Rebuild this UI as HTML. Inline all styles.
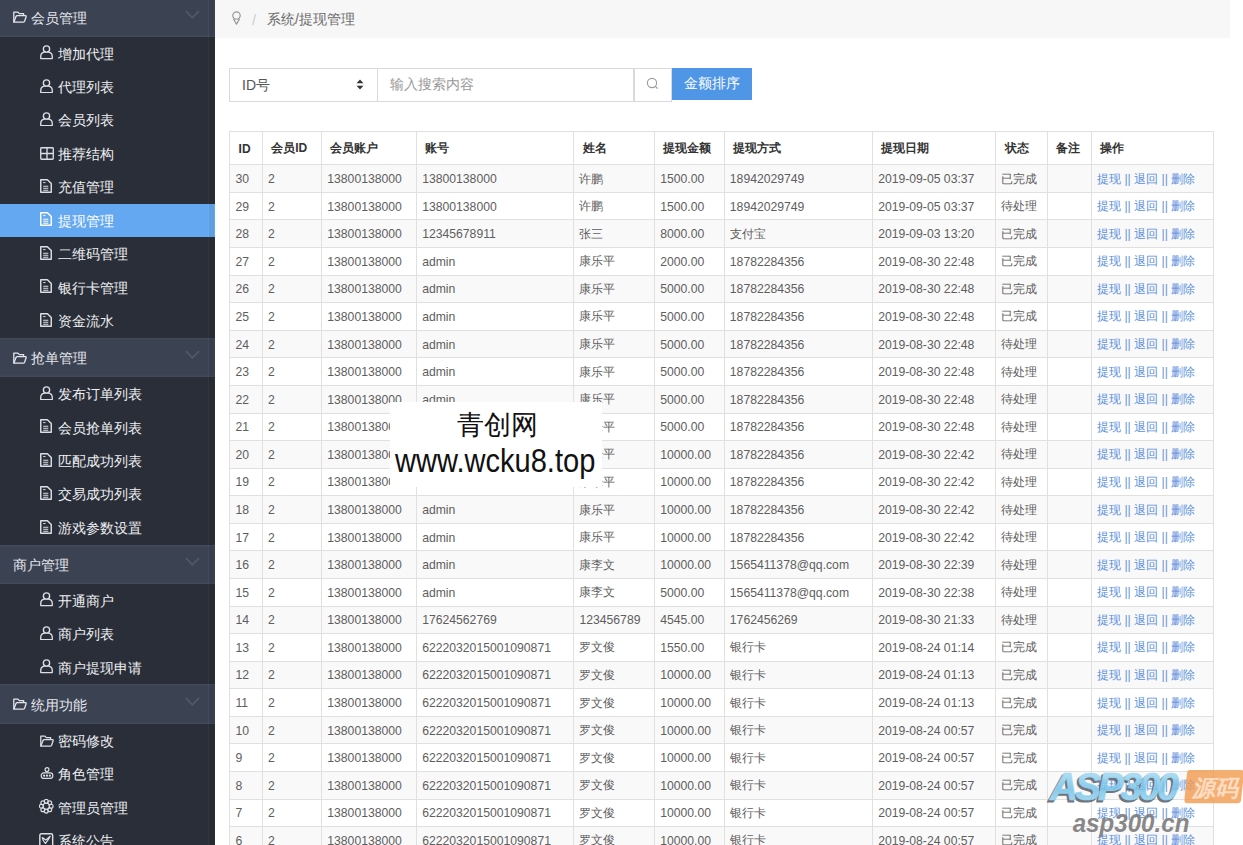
<!DOCTYPE html>
<html><head><meta charset="utf-8"><title>提现管理</title>
<style>
*{box-sizing:border-box;margin:0;padding:0}
html,body{width:1243px;height:845px;overflow:hidden;background:#fff;font-family:"Liberation Sans",sans-serif}
#side{position:absolute;left:0;top:0;width:215px;height:845px;background:#2a2e38;overflow:hidden}
.gh{position:absolute;left:0;width:215px;height:39.5px;background:#3b4252;box-shadow:inset 0 1.5px 0 rgba(255,255,255,0.04),inset 0 -1.5px 0 rgba(255,255,255,0.04);color:#e6e8ee;font-size:14px;line-height:39.5px;white-space:nowrap}
.gh .ic{position:absolute;left:12.8px;color:#e3e6ec}
.gh .ic[style]{top:14px!important}
.gh .gt{position:absolute;left:31px;top:1.5px;font-weight:500;font-size:13.8px}
.gh.noic .gt{left:13px}
.gh .chev{position:absolute;left:185.3px;top:12.6px;width:15px;height:9px;color:#505766}
.it{position:absolute;left:0;width:215px;height:33.45px;color:#eef0f3;font-size:13.6px;line-height:33.45px;white-space:nowrap}
.it .ic{position:absolute;left:40px;width:13px;height:13px;color:#dcdfe5}
.it .t{position:absolute;left:57.8px;top:0.8px;font-weight:500}
.it.act{background:#63a8f0;color:#fff}
.it.act .ic{color:#fff}
#crumb{position:absolute;left:215px;top:0;width:1015px;height:37.6px;background:#f7f7f7}
#crumb .bulb{position:absolute;left:231.5px;top:11px;width:11px;height:14px}
#crumb .sl{position:absolute;left:251px;top:11px;font-size:14px;color:#c8c8c8;line-height:16px}
#crumb .ct{position:absolute;left:267px;top:10.5px;font-size:13.8px;color:#6a6a6a;line-height:18px}
#search{position:absolute;left:229px;top:68.3px;height:33.5px}
.sel{position:absolute;left:0;top:0;width:148.5px;height:33.5px;border:1px solid #d9d9d9;background:#fff}
.sel .v{position:absolute;left:12px;top:6.5px;font-size:14px;color:#555;line-height:18px}
.sel .arr{position:absolute;left:126px;top:10px;width:8px;height:11px}
.inp{position:absolute;left:148px;top:0;width:257px;height:33.5px;border:1px solid #d9d9d9;background:#fff}
.inp .ph{position:absolute;left:12px;top:7px;font-size:13.5px;color:#999;line-height:18px}
.sbtn{position:absolute;left:404.5px;top:0;width:38.5px;height:33.5px;border:1px solid #d9d9d9;background:#fff}
.sbtn svg{position:absolute;left:11px;top:7.5px;width:14px;height:14px}
.pbtn{position:absolute;left:443px;top:0;width:80px;height:32px;background:#5096e6;color:#fff;font-size:13.5px;font-weight:500;line-height:32px;text-align:center}
#tbl{position:absolute;left:229.1px;top:131.0px;border-collapse:collapse;table-layout:fixed;width:984.10px;font-size:12.5px}
#tbl th,#tbl td{border:1px solid #e0e0e0;text-align:left;white-space:nowrap;overflow:hidden;font-weight:normal}
#tbl th{height:33.3px;padding-left:8.5px;padding-top:1px;color:#333;font-weight:bold;font-size:12px}
#tbl td{height:27.58px;padding-left:5.3px;padding-top:1px;color:#5e5e5e;font-size:12.2px}
#tbl tr.odd td{background:#f9f9f9}
#tbl td.op{color:#6b93d6}
#tbl td.op a{color:#5b8fe0}
#wm{position:absolute;left:390px;top:401.5px;width:211.5px;height:85px;background:#fff}
#wm .a{position:absolute;left:0;width:212px;top:7.5px;text-align:center;font-size:27px;color:#111;line-height:32px;padding-left:3px}
#wm .b{position:absolute;left:5px;top:41px;white-space:nowrap;font-size:33px;color:#111;line-height:36px;transform:scaleX(0.881);transform-origin:0 0}
#asp{position:absolute;left:1040px;top:760px;width:203px;height:85px}
</style></head><body>
<div id="side">
<div class="gh" style="top:-2.70px"><svg class="ic" viewBox="0 0 14 12" style="width:14px;height:12px;top:11px"><path d="M0.8 11.2V1.1H4.9L6.3 2.6H10.6V4.6" fill="none" stroke="currentColor" stroke-width="1.3" stroke-linejoin="round"/><path d="M0.8 11.2L3 5.6Q3.3 4.7 4.2 4.7H12.3Q13.5 4.7 13.1 5.8L11.6 10.2Q11.2 11.2 10.2 11.2Z" fill="none" stroke="currentColor" stroke-width="1.3" stroke-linejoin="round"/></svg><span class="gt">会员管理</span><svg class="chev" viewBox="0 0 15 9"><path d="M1 1L7.3 7.8L14 1" fill="none" stroke="currentColor" stroke-width="1.9"/></svg></div><div class="it" style="top:36.80px"><svg class="ic" viewBox="0 0 13 14.5" style="width:13px;height:14.5px;top:8.3px"><path d="M0.75 13.6V11.2C0.75 8.6 2.9 6.9 6.5 6.9C10.1 6.9 12.25 8.6 12.25 11.2V13.6Z" fill="none" stroke="currentColor" stroke-width="1.35" stroke-linejoin="round"/><circle cx="6.5" cy="4" r="3.15" fill="#2a2e38" stroke="currentColor" stroke-width="1.35"/></svg><span class="t">增加代理</span></div><div class="it" style="top:70.25px"><svg class="ic" viewBox="0 0 13 14.5" style="width:13px;height:14.5px;top:8.3px"><path d="M0.75 13.6V11.2C0.75 8.6 2.9 6.9 6.5 6.9C10.1 6.9 12.25 8.6 12.25 11.2V13.6Z" fill="none" stroke="currentColor" stroke-width="1.35" stroke-linejoin="round"/><circle cx="6.5" cy="4" r="3.15" fill="#2a2e38" stroke="currentColor" stroke-width="1.35"/></svg><span class="t">代理列表</span></div><div class="it" style="top:103.70px"><svg class="ic" viewBox="0 0 13 14.5" style="width:13px;height:14.5px;top:8.3px"><path d="M0.75 13.6V11.2C0.75 8.6 2.9 6.9 6.5 6.9C10.1 6.9 12.25 8.6 12.25 11.2V13.6Z" fill="none" stroke="currentColor" stroke-width="1.35" stroke-linejoin="round"/><circle cx="6.5" cy="4" r="3.15" fill="#2a2e38" stroke="currentColor" stroke-width="1.35"/></svg><span class="t">会员列表</span></div><div class="it" style="top:137.15px"><svg class="ic" viewBox="0 0 14 13" style="top:9.6px;left:39.5px;width:14px;height:13px"><rect x="0.75" y="0.75" width="12.5" height="11.5" rx="0.8" fill="none" stroke="currentColor" stroke-width="1.35"/><path d="M7 0.75V12.25M0.75 6.5H13.25" stroke="currentColor" stroke-width="1.35"/></svg><span class="t">推荐结构</span></div><div class="it" style="top:170.60px"><svg class="ic" viewBox="0 0 12 14" style="width:12px;height:14px;top:8.4px"><path d="M0.75 0.75H7.4L11.25 4.6V13.25H0.75Z" fill="none" stroke="currentColor" stroke-width="1.45" stroke-linejoin="round"/><path d="M3.2 7.3H8.3M3.2 9.3H8.3M3.2 11.2H8.3" stroke="currentColor" stroke-width="1.1"/><path d="M3.2 3.6H5.5" stroke="currentColor" stroke-width="1"/></svg><span class="t">充值管理</span></div><div class="it act" style="top:204.05px"><svg class="ic" viewBox="0 0 12 14" style="width:12px;height:14px;top:8.4px"><path d="M0.75 0.75H7.4L11.25 4.6V13.25H0.75Z" fill="none" stroke="currentColor" stroke-width="1.45" stroke-linejoin="round"/><path d="M3.2 7.3H8.3M3.2 9.3H8.3M3.2 11.2H8.3" stroke="currentColor" stroke-width="1.1"/><path d="M3.2 3.6H5.5" stroke="currentColor" stroke-width="1"/></svg><span class="t">提现管理</span></div><div class="it" style="top:237.50px"><svg class="ic" viewBox="0 0 12 14" style="width:12px;height:14px;top:8.4px"><path d="M0.75 0.75H7.4L11.25 4.6V13.25H0.75Z" fill="none" stroke="currentColor" stroke-width="1.45" stroke-linejoin="round"/><path d="M3.2 7.3H8.3M3.2 9.3H8.3M3.2 11.2H8.3" stroke="currentColor" stroke-width="1.1"/><path d="M3.2 3.6H5.5" stroke="currentColor" stroke-width="1"/></svg><span class="t">二维码管理</span></div><div class="it" style="top:270.95px"><svg class="ic" viewBox="0 0 12 14" style="width:12px;height:14px;top:8.4px"><path d="M0.75 0.75H7.4L11.25 4.6V13.25H0.75Z" fill="none" stroke="currentColor" stroke-width="1.45" stroke-linejoin="round"/><path d="M3.2 7.3H8.3M3.2 9.3H8.3M3.2 11.2H8.3" stroke="currentColor" stroke-width="1.1"/><path d="M3.2 3.6H5.5" stroke="currentColor" stroke-width="1"/></svg><span class="t">银行卡管理</span></div><div class="it" style="top:304.40px"><svg class="ic" viewBox="0 0 12 14" style="width:12px;height:14px;top:8.4px"><path d="M0.75 0.75H7.4L11.25 4.6V13.25H0.75Z" fill="none" stroke="currentColor" stroke-width="1.45" stroke-linejoin="round"/><path d="M3.2 7.3H8.3M3.2 9.3H8.3M3.2 11.2H8.3" stroke="currentColor" stroke-width="1.1"/><path d="M3.2 3.6H5.5" stroke="currentColor" stroke-width="1"/></svg><span class="t">资金流水</span></div><div class="gh" style="top:337.85px"><svg class="ic" viewBox="0 0 14 12" style="width:14px;height:12px;top:11px"><path d="M0.8 11.2V1.1H4.9L6.3 2.6H10.6V4.6" fill="none" stroke="currentColor" stroke-width="1.3" stroke-linejoin="round"/><path d="M0.8 11.2L3 5.6Q3.3 4.7 4.2 4.7H12.3Q13.5 4.7 13.1 5.8L11.6 10.2Q11.2 11.2 10.2 11.2Z" fill="none" stroke="currentColor" stroke-width="1.3" stroke-linejoin="round"/></svg><span class="gt">抢单管理</span><svg class="chev" viewBox="0 0 15 9"><path d="M1 1L7.3 7.8L14 1" fill="none" stroke="currentColor" stroke-width="1.9"/></svg></div><div class="it" style="top:377.35px"><svg class="ic" viewBox="0 0 13 14.5" style="width:13px;height:14.5px;top:8.3px"><path d="M0.75 13.6V11.2C0.75 8.6 2.9 6.9 6.5 6.9C10.1 6.9 12.25 8.6 12.25 11.2V13.6Z" fill="none" stroke="currentColor" stroke-width="1.35" stroke-linejoin="round"/><circle cx="6.5" cy="4" r="3.15" fill="#2a2e38" stroke="currentColor" stroke-width="1.35"/></svg><span class="t">发布订单列表</span></div><div class="it" style="top:410.80px"><svg class="ic" viewBox="0 0 12 14" style="width:12px;height:14px;top:8.4px"><path d="M0.75 0.75H7.4L11.25 4.6V13.25H0.75Z" fill="none" stroke="currentColor" stroke-width="1.45" stroke-linejoin="round"/><path d="M3.2 7.3H8.3M3.2 9.3H8.3M3.2 11.2H8.3" stroke="currentColor" stroke-width="1.1"/><path d="M3.2 3.6H5.5" stroke="currentColor" stroke-width="1"/></svg><span class="t">会员抢单列表</span></div><div class="it" style="top:444.25px"><svg class="ic" viewBox="0 0 12 14" style="width:12px;height:14px;top:8.4px"><path d="M0.75 0.75H7.4L11.25 4.6V13.25H0.75Z" fill="none" stroke="currentColor" stroke-width="1.45" stroke-linejoin="round"/><path d="M3.2 7.3H8.3M3.2 9.3H8.3M3.2 11.2H8.3" stroke="currentColor" stroke-width="1.1"/><path d="M3.2 3.6H5.5" stroke="currentColor" stroke-width="1"/></svg><span class="t">匹配成功列表</span></div><div class="it" style="top:477.70px"><svg class="ic" viewBox="0 0 12 14" style="width:12px;height:14px;top:8.4px"><path d="M0.75 0.75H7.4L11.25 4.6V13.25H0.75Z" fill="none" stroke="currentColor" stroke-width="1.45" stroke-linejoin="round"/><path d="M3.2 7.3H8.3M3.2 9.3H8.3M3.2 11.2H8.3" stroke="currentColor" stroke-width="1.1"/><path d="M3.2 3.6H5.5" stroke="currentColor" stroke-width="1"/></svg><span class="t">交易成功列表</span></div><div class="it" style="top:511.15px"><svg class="ic" viewBox="0 0 12 14" style="width:12px;height:14px;top:8.4px"><path d="M0.75 0.75H7.4L11.25 4.6V13.25H0.75Z" fill="none" stroke="currentColor" stroke-width="1.45" stroke-linejoin="round"/><path d="M3.2 7.3H8.3M3.2 9.3H8.3M3.2 11.2H8.3" stroke="currentColor" stroke-width="1.1"/><path d="M3.2 3.6H5.5" stroke="currentColor" stroke-width="1"/></svg><span class="t">游戏参数设置</span></div><div class="gh noic" style="top:544.60px"><span class="gt">商户管理</span><svg class="chev" viewBox="0 0 15 9"><path d="M1 1L7.3 7.8L14 1" fill="none" stroke="currentColor" stroke-width="1.9"/></svg></div><div class="it" style="top:584.10px"><svg class="ic" viewBox="0 0 13 14.5" style="width:13px;height:14.5px;top:8.3px"><path d="M0.75 13.6V11.2C0.75 8.6 2.9 6.9 6.5 6.9C10.1 6.9 12.25 8.6 12.25 11.2V13.6Z" fill="none" stroke="currentColor" stroke-width="1.35" stroke-linejoin="round"/><circle cx="6.5" cy="4" r="3.15" fill="#2a2e38" stroke="currentColor" stroke-width="1.35"/></svg><span class="t">开通商户</span></div><div class="it" style="top:617.55px"><svg class="ic" viewBox="0 0 13 14.5" style="width:13px;height:14.5px;top:8.3px"><path d="M0.75 13.6V11.2C0.75 8.6 2.9 6.9 6.5 6.9C10.1 6.9 12.25 8.6 12.25 11.2V13.6Z" fill="none" stroke="currentColor" stroke-width="1.35" stroke-linejoin="round"/><circle cx="6.5" cy="4" r="3.15" fill="#2a2e38" stroke="currentColor" stroke-width="1.35"/></svg><span class="t">商户列表</span></div><div class="it" style="top:651.00px"><svg class="ic" viewBox="0 0 13 14.5" style="width:13px;height:14.5px;top:8.3px"><path d="M0.75 13.6V11.2C0.75 8.6 2.9 6.9 6.5 6.9C10.1 6.9 12.25 8.6 12.25 11.2V13.6Z" fill="none" stroke="currentColor" stroke-width="1.35" stroke-linejoin="round"/><circle cx="6.5" cy="4" r="3.15" fill="#2a2e38" stroke="currentColor" stroke-width="1.35"/></svg><span class="t">商户提现申请</span></div><div class="gh" style="top:684.45px"><svg class="ic" viewBox="0 0 14 12" style="width:14px;height:12px;top:11px"><path d="M0.8 11.2V1.1H4.9L6.3 2.6H10.6V4.6" fill="none" stroke="currentColor" stroke-width="1.3" stroke-linejoin="round"/><path d="M0.8 11.2L3 5.6Q3.3 4.7 4.2 4.7H12.3Q13.5 4.7 13.1 5.8L11.6 10.2Q11.2 11.2 10.2 11.2Z" fill="none" stroke="currentColor" stroke-width="1.3" stroke-linejoin="round"/></svg><span class="gt">统用功能</span><svg class="chev" viewBox="0 0 15 9"><path d="M1 1L7.3 7.8L14 1" fill="none" stroke="currentColor" stroke-width="1.9"/></svg></div><div class="it" style="top:723.95px"><svg class="ic" viewBox="0 0 14 12" style="width:14px;height:12px;top:11px"><path d="M0.8 11.2V1.1H4.9L6.3 2.6H10.6V4.6" fill="none" stroke="currentColor" stroke-width="1.3" stroke-linejoin="round"/><path d="M0.8 11.2L3 5.6Q3.3 4.7 4.2 4.7H12.3Q13.5 4.7 13.1 5.8L11.6 10.2Q11.2 11.2 10.2 11.2Z" fill="none" stroke="currentColor" stroke-width="1.3" stroke-linejoin="round"/></svg><span class="t">密码修改</span></div><div class="it" style="top:757.40px"><svg class="ic" viewBox="0 0 14 14" style="top:9.8px;left:39.5px;width:14px;height:13px"><circle cx="7" cy="2.8" r="2.1" fill="none" stroke="currentColor" stroke-width="1.3"/><rect x="0.8" y="6.3" width="12.4" height="6" rx="2.6" fill="none" stroke="currentColor" stroke-width="1.3"/><circle cx="3.9" cy="9.3" r="1.2" fill="currentColor"/><circle cx="7" cy="9.3" r="1.2" fill="currentColor"/><circle cx="10.1" cy="9.3" r="1.2" fill="currentColor"/></svg><span class="t">角色管理</span></div><div class="it" style="top:790.85px"><svg class="ic" viewBox="0 0 14 14" style="top:8.5px;left:39px;width:14.5px;height:14.5px"><circle cx="11.70" cy="7.00" r="1.9" fill="none" stroke="currentColor" stroke-width="1.1"/><circle cx="10.32" cy="10.32" r="1.9" fill="none" stroke="currentColor" stroke-width="1.1"/><circle cx="7.00" cy="11.70" r="1.9" fill="none" stroke="currentColor" stroke-width="1.1"/><circle cx="3.68" cy="10.32" r="1.9" fill="none" stroke="currentColor" stroke-width="1.1"/><circle cx="2.30" cy="7.00" r="1.9" fill="none" stroke="currentColor" stroke-width="1.1"/><circle cx="3.68" cy="3.68" r="1.9" fill="none" stroke="currentColor" stroke-width="1.1"/><circle cx="7.00" cy="2.30" r="1.9" fill="none" stroke="currentColor" stroke-width="1.1"/><circle cx="10.32" cy="3.68" r="1.9" fill="none" stroke="currentColor" stroke-width="1.1"/><circle cx="7" cy="7" r="3" fill="#2a2e38" stroke="currentColor" stroke-width="1.2"/></svg><span class="t">管理员管理</span></div><div class="it" style="top:824.30px"><svg class="ic" viewBox="0 0 14 14" style="top:8.5px;left:39px;width:14.5px;height:14.5px"><rect x="0.8" y="0.8" width="12.4" height="12.4" rx="1.5" fill="none" stroke="currentColor" stroke-width="1.4"/><path d="M3.2 4.5Q4 8.5 6.3 10Q9 7 10.8 3.2Q8.5 5.5 6.5 6.8Q5 5.5 3.2 4.5Z" fill="none" stroke="currentColor" stroke-width="1.2" stroke-linejoin="round"/></svg><span class="t">系统公告</span></div>
<div style="position:absolute;left:208px;top:0;width:1px;height:845px;background:rgba(255,255,255,0.04)"></div><div style="position:absolute;left:209px;top:0;width:5px;height:845px;background:rgba(0,0,0,0.06)"></div>
</div>
<div id="crumb">
<svg class="bulb" style="left:16.3px;top:11.3px;width:11px;height:14px" viewBox="0 0 11 14"><path d="M2.4 7.6L5.5 13.2L8.6 7.6" fill="none" stroke="#9a9a9a" stroke-width="1.25" stroke-linejoin="round"/><circle cx="5.5" cy="4.5" r="3.7" fill="#f7f7f7" stroke="#9a9a9a" stroke-width="1.25"/></svg>
<span class="sl" style="left:37px;top:12px;font-size:15px;color:#cfcfcf">/</span>
<span class="ct" style="left:52px">系统/提现管理</span>
</div>
<div id="search">
<div class="sel"><span class="v">ID号</span><svg class="arr" viewBox="0 0 8 11"><path d="M4 0.5L7.5 4.3H0.5Z" fill="#333"/><path d="M4 10.5L7.5 6.7H0.5Z" fill="#333"/></svg></div>
<div class="inp"><span class="ph">输入搜索内容</span></div>
<div class="sbtn"><svg viewBox="0 0 14 14"><circle cx="6" cy="6" r="4.6" fill="none" stroke="#9a9a9a" stroke-width="1.1"/><path d="M9.3 9.3L11.6 11.6" stroke="#9a9a9a" stroke-width="1.2"/></svg></div>
<div class="pbtn">金额排序</div>
</div>
<table id="tbl"><colgroup><col style="width:32.70px"><col style="width:59.20px"><col style="width:94.90px"><col style="width:157.30px"><col style="width:80.70px"><col style="width:69.70px"><col style="width:148.30px"><col style="width:123.30px"><col style="width:51.60px"><col style="width:44.00px"><col style="width:122.40px"></colgroup><thead><tr><th>ID</th><th>会员ID</th><th>会员账户</th><th>账号</th><th>姓名</th><th>提现金额</th><th>提现方式</th><th>提现日期</th><th>状态</th><th>备注</th><th>操作</th></tr></thead><tbody>
<tr class="odd"><td>30</td><td>2</td><td>13800138000</td><td>13800138000</td><td>许鹏</td><td>1500.00</td><td>18942029749</td><td>2019-09-05 03:37</td><td>已完成</td><td></td><td class="op"><a>提现</a> || <a>退回</a> || <a>删除</a></td></tr><tr><td>29</td><td>2</td><td>13800138000</td><td>13800138000</td><td>许鹏</td><td>1500.00</td><td>18942029749</td><td>2019-09-05 03:37</td><td>待处理</td><td></td><td class="op"><a>提现</a> || <a>退回</a> || <a>删除</a></td></tr><tr class="odd"><td>28</td><td>2</td><td>13800138000</td><td>12345678911</td><td>张三</td><td>8000.00</td><td>支付宝</td><td>2019-09-03 13:20</td><td>已完成</td><td></td><td class="op"><a>提现</a> || <a>退回</a> || <a>删除</a></td></tr><tr><td>27</td><td>2</td><td>13800138000</td><td>admin</td><td>康乐平</td><td>2000.00</td><td>18782284356</td><td>2019-08-30 22:48</td><td>已完成</td><td></td><td class="op"><a>提现</a> || <a>退回</a> || <a>删除</a></td></tr><tr class="odd"><td>26</td><td>2</td><td>13800138000</td><td>admin</td><td>康乐平</td><td>5000.00</td><td>18782284356</td><td>2019-08-30 22:48</td><td>已完成</td><td></td><td class="op"><a>提现</a> || <a>退回</a> || <a>删除</a></td></tr><tr><td>25</td><td>2</td><td>13800138000</td><td>admin</td><td>康乐平</td><td>5000.00</td><td>18782284356</td><td>2019-08-30 22:48</td><td>已完成</td><td></td><td class="op"><a>提现</a> || <a>退回</a> || <a>删除</a></td></tr><tr class="odd"><td>24</td><td>2</td><td>13800138000</td><td>admin</td><td>康乐平</td><td>5000.00</td><td>18782284356</td><td>2019-08-30 22:48</td><td>待处理</td><td></td><td class="op"><a>提现</a> || <a>退回</a> || <a>删除</a></td></tr><tr><td>23</td><td>2</td><td>13800138000</td><td>admin</td><td>康乐平</td><td>5000.00</td><td>18782284356</td><td>2019-08-30 22:48</td><td>待处理</td><td></td><td class="op"><a>提现</a> || <a>退回</a> || <a>删除</a></td></tr><tr class="odd"><td>22</td><td>2</td><td>13800138000</td><td>admin</td><td>康乐平</td><td>5000.00</td><td>18782284356</td><td>2019-08-30 22:48</td><td>待处理</td><td></td><td class="op"><a>提现</a> || <a>退回</a> || <a>删除</a></td></tr><tr><td>21</td><td>2</td><td>13800138000</td><td>admin</td><td>康乐平</td><td>5000.00</td><td>18782284356</td><td>2019-08-30 22:48</td><td>待处理</td><td></td><td class="op"><a>提现</a> || <a>退回</a> || <a>删除</a></td></tr><tr class="odd"><td>20</td><td>2</td><td>13800138000</td><td>admin</td><td>康乐平</td><td>10000.00</td><td>18782284356</td><td>2019-08-30 22:42</td><td>待处理</td><td></td><td class="op"><a>提现</a> || <a>退回</a> || <a>删除</a></td></tr><tr><td>19</td><td>2</td><td>13800138000</td><td>admin</td><td>康乐平</td><td>10000.00</td><td>18782284356</td><td>2019-08-30 22:42</td><td>待处理</td><td></td><td class="op"><a>提现</a> || <a>退回</a> || <a>删除</a></td></tr><tr class="odd"><td>18</td><td>2</td><td>13800138000</td><td>admin</td><td>康乐平</td><td>10000.00</td><td>18782284356</td><td>2019-08-30 22:42</td><td>待处理</td><td></td><td class="op"><a>提现</a> || <a>退回</a> || <a>删除</a></td></tr><tr><td>17</td><td>2</td><td>13800138000</td><td>admin</td><td>康乐平</td><td>10000.00</td><td>18782284356</td><td>2019-08-30 22:42</td><td>待处理</td><td></td><td class="op"><a>提现</a> || <a>退回</a> || <a>删除</a></td></tr><tr class="odd"><td>16</td><td>2</td><td>13800138000</td><td>admin</td><td>康李文</td><td>10000.00</td><td>1565411378@qq.com</td><td>2019-08-30 22:39</td><td>待处理</td><td></td><td class="op"><a>提现</a> || <a>退回</a> || <a>删除</a></td></tr><tr><td>15</td><td>2</td><td>13800138000</td><td>admin</td><td>康李文</td><td>5000.00</td><td>1565411378@qq.com</td><td>2019-08-30 22:38</td><td>待处理</td><td></td><td class="op"><a>提现</a> || <a>退回</a> || <a>删除</a></td></tr><tr class="odd"><td>14</td><td>2</td><td>13800138000</td><td>17624562769</td><td>123456789</td><td>4545.00</td><td>1762456269</td><td>2019-08-30 21:33</td><td>待处理</td><td></td><td class="op"><a>提现</a> || <a>退回</a> || <a>删除</a></td></tr><tr><td>13</td><td>2</td><td>13800138000</td><td>6222032015001090871</td><td>罗文俊</td><td>1550.00</td><td>银行卡</td><td>2019-08-24 01:14</td><td>已完成</td><td></td><td class="op"><a>提现</a> || <a>退回</a> || <a>删除</a></td></tr><tr class="odd"><td>12</td><td>2</td><td>13800138000</td><td>6222032015001090871</td><td>罗文俊</td><td>10000.00</td><td>银行卡</td><td>2019-08-24 01:13</td><td>已完成</td><td></td><td class="op"><a>提现</a> || <a>退回</a> || <a>删除</a></td></tr><tr><td>11</td><td>2</td><td>13800138000</td><td>6222032015001090871</td><td>罗文俊</td><td>10000.00</td><td>银行卡</td><td>2019-08-24 01:13</td><td>已完成</td><td></td><td class="op"><a>提现</a> || <a>退回</a> || <a>删除</a></td></tr><tr class="odd"><td>10</td><td>2</td><td>13800138000</td><td>6222032015001090871</td><td>罗文俊</td><td>10000.00</td><td>银行卡</td><td>2019-08-24 00:57</td><td>已完成</td><td></td><td class="op"><a>提现</a> || <a>退回</a> || <a>删除</a></td></tr><tr><td>9</td><td>2</td><td>13800138000</td><td>6222032015001090871</td><td>罗文俊</td><td>10000.00</td><td>银行卡</td><td>2019-08-24 00:57</td><td>已完成</td><td></td><td class="op"><a>提现</a> || <a>退回</a> || <a>删除</a></td></tr><tr class="odd"><td>8</td><td>2</td><td>13800138000</td><td>6222032015001090871</td><td>罗文俊</td><td>10000.00</td><td>银行卡</td><td>2019-08-24 00:57</td><td>已完成</td><td></td><td class="op"><a>提现</a> || <a>退回</a> || <a>删除</a></td></tr><tr><td>7</td><td>2</td><td>13800138000</td><td>6222032015001090871</td><td>罗文俊</td><td>10000.00</td><td>银行卡</td><td>2019-08-24 00:57</td><td>已完成</td><td></td><td class="op"><a>提现</a> || <a>退回</a> || <a>删除</a></td></tr><tr class="odd"><td>6</td><td>2</td><td>13800138000</td><td>6222032015001090871</td><td>罗文俊</td><td>10000.00</td><td>银行卡</td><td>2019-08-24 00:57</td><td>已完成</td><td></td><td class="op"><a>提现</a> || <a>退回</a> || <a>删除</a></td></tr>
</tbody></table>
<svg id="asp" viewBox="0 0 203 85" width="203" height="85">
<defs><linearGradient id="lg" x1="0" y1="0" x2="0" y2="1"><stop offset="0" stop-color="#b9e4f7"/><stop offset="0.55" stop-color="#74c2e8"/><stop offset="1" stop-color="#a6daf2"/></linearGradient></defs>
<g opacity="0.85">
<text x="8.3" y="41.6" font-family="Liberation Sans" font-weight="bold" font-style="italic" font-size="39" textLength="129" lengthAdjust="spacing" fill="#56616b" stroke="#56616b" stroke-width="1.2" stroke-linejoin="round">ASP300</text>
<text x="10" y="40.4" font-family="Liberation Sans" font-weight="bold" font-style="italic" font-size="39" textLength="129" lengthAdjust="spacing" fill="url(#lg)" stroke="#8fd0ee" stroke-width="0.6" stroke-linejoin="round">ASP300</text>
</g>
<path d="M149.5 10H201Q204 10 204 13L201 40.5Q200.5 43.2 197.5 43.2H147.2Q144 43.2 144.4 40.2L147 12.8Q147.4 10 149.5 10Z" fill="#f39a4f" opacity="0.8"/>
<text x="152" y="36" font-weight="bold" font-style="italic" font-size="23" fill="#fde3cc" opacity="0.9">源码</text>
<text x="32.7" y="71.9" font-family="Liberation Sans" font-weight="bold" font-style="italic" font-size="25" textLength="116.7" lengthAdjust="spacingAndGlyphs" fill="#7c7c7c" opacity="0.9">asp300.cn</text>
</svg>
<div id="wm"><div class="a">青创网</div><div class="b">www.wcku8.top</div></div>
</body></html>
